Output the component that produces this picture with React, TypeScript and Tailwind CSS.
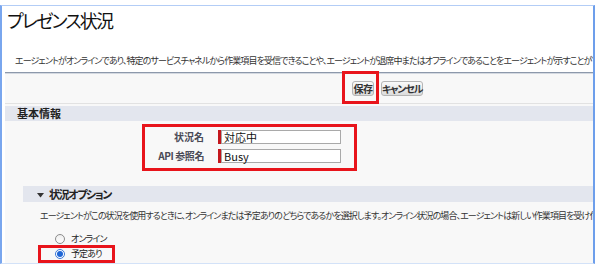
import React from "react";

const FONT = "font-['Noto_Sans_CJK_JP','Noto_Sans',sans-serif] [font-feature-settings:'palt']";

function Radio({ checked }: { checked?: boolean }) {
  return checked ? (
    <span className="flex h-[10px] w-[10px] items-center justify-center rounded-full border border-[#3b78d8] bg-white">
      <span className="h-[6px] w-[6px] rounded-full bg-[#1f66d6]" />
    </span>
  ) : (
    <span className="h-[10px] w-[10px] rounded-full border border-[#8c8c8c] bg-gradient-to-b from-[#eeeeee] to-white" />
  );
}

export default function App() {
  return (
    <div className={`relative h-[265px] w-[598px] overflow-hidden bg-white pt-[5px] text-[#222] ${FONT}`}>
      <div className="flex h-[259px] w-[595px] flex-col border-t border-l-2 border-r-2 border-b border-t-[#b3cdf6] border-l-[#79a6ee] border-r-[#6d9eeb] border-b-[#d3e2f8]">
        {/* Title area */}
        <div className="h-[66px] shrink-0 overflow-hidden bg-white">
          <div className="pl-[5px] pt-[2px] text-[18px] leading-[24px] tracking-[-1.8px] text-[#111]">プレゼンス状況</div>
          <div className="mt-[23px] whitespace-nowrap pl-[13px] text-[9px] leading-[12px] tracking-[-0.9px] text-[#333]">
            エージェントがオンラインであり、特定のサービスチャネルから作業項目を受信できることや、エージェントが退席中またはオフラインであることをエージェントが示すことができます。
          </div>
        </div>
        {/* Panel */}
        <div className="ml-[3px] flex flex-1 flex-col overflow-hidden border-t border-t-[#8d99ab] bg-[#f8f8f8]">
          <div className="flex h-[31px] shrink-0 items-center border-b border-b-[#e2e2e2] pl-[347px] pt-[1px] shadow-[inset_0_1px_0_#d4d9e1]">
            <button className="h-[15px] w-[22px] whitespace-nowrap rounded-[3px] border border-[#b5b5b5] bg-gradient-to-b from-[#fafafa] to-[#dcdcdc] p-0 text-[10px] font-bold leading-[13px] tracking-[-0.5px] text-[#333]">
              保存
            </button>
            <button className="ml-[7px] h-[15px] w-[42px] whitespace-nowrap rounded-[3px] border border-[#b5b5b5] bg-gradient-to-b from-[#fafafa] to-[#dcdcdc] p-0 text-[10px] font-bold leading-[13px] tracking-[-1.2px] text-[#333]">
              キャンセル
            </button>
          </div>
          <div className="mt-[2px] h-[15px] shrink-0 bg-[#e3e6ee] pl-[12px] text-[11px] font-bold leading-[15px] text-[#222]">
            基本情報
          </div>
          <div className="flex flex-col gap-[4px] pt-[8px]">
            <div className="flex h-[15px] items-center">
              <div className="w-[199px] text-right text-[10px] font-bold leading-[12px] text-[#4a4a56]">状況名</div>
              <div className="ml-[14px] flex h-[14px] w-[123px] border-l-[3px] border-l-[#c4161c]">
                <div className="flex-1 border border-[#a9a9a9] bg-white pl-[2px] text-[11px] leading-[12px] text-[#111]">対応中</div>
              </div>
            </div>
            <div className="flex h-[15px] items-center">
              <div className="w-[199px] text-right text-[10px] font-bold leading-[12px] tracking-[-0.4px] text-[#4a4a56]">API 参照名</div>
              <div className="ml-[14px] flex h-[14px] w-[123px] border-l-[3px] border-l-[#c4161c]">
                <div className="flex-1 border border-[#a9a9a9] bg-white pl-[2px] text-[11px] leading-[12px] text-[#111]">Busy</div>
              </div>
            </div>
          </div>
          <div className="ml-[18px] mt-[23px] flex h-[16px] shrink-0 items-center bg-[#e3e6ee] pl-[14px]">
            <svg width="7" height="6" viewBox="0 0 7 6" className="mt-[2px]">
              <path d="M0 1 L7 1 L3.5 5.5 Z" fill="#333" />
            </svg>
            <span className="ml-[5px] text-[11px] font-bold leading-[14px] tracking-[-1.4px] text-[#222]">状況オプション</span>
          </div>
          <div className="mt-[8px] whitespace-nowrap pl-[35px] text-[9px] leading-[12px] tracking-[-0.9px] text-[#333]">
            エージェントがこの状況を使用するときに、オンラインまたは予定ありのどちらであるかを選択します。オンライン状況の場合、エージェントは新しい作業項目を受け付けることができます。
          </div>
          <div className="mt-[12px] flex flex-col gap-[5px] pl-[50px]">
            <div className="flex h-[10px] items-center gap-[6px]">
              <Radio />
              <span className="text-[9px] leading-[12px] tracking-[-0.9px] text-[#222]">オンライン</span>
            </div>
            <div className="flex h-[10px] items-center gap-[6px]">
              <Radio checked />
              <span className="text-[9px] leading-[12px] tracking-[-0.9px] text-[#222]">予定あり</span>
            </div>
          </div>
        </div>
      </div>
      {/* Red annotation boxes */}
      <div className="absolute left-[342px] top-[71px] h-[33px] w-[37px] border-[3px] border-[#e8141b]" />
      <div className="absolute left-[142px] top-[124px] h-[47px] w-[215px] border-[3px] border-[#e8141b]" />
      <div className="absolute left-[38px] top-[245px] h-[18px] w-[77px] border-[3px] border-[#e8141b]" />
    </div>
  );
}
